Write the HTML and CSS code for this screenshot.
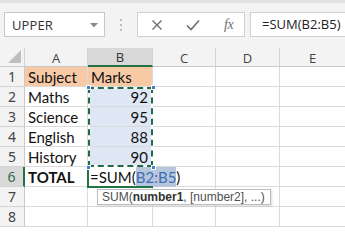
FILE: index.html
```html
<!DOCTYPE html>
<html>
<head>
<meta charset="utf-8">
<link rel="stylesheet" href="styles.css">
</head>
<body>
<div class="app">
  <div class="top">
    <div class="namebox">
      <span class="nb-text">UPPER</span>
      <svg class="nb-caret" width="8" height="5" viewBox="0 0 8 5"><path d="M0 0 H8 L4 4.5 Z" fill="#8a8a8a"/></svg>
    </div>
    <div class="grip"><i></i><i></i><i></i></div>
    <div class="btns">
      <svg class="ic" width="12" height="12" viewBox="0 0 12 12"><path d="M1.5 1.5 L10.5 10.5 M10.5 1.5 L1.5 10.5" stroke="#6e6e6e" stroke-width="1.4" fill="none"/></svg>
      <svg class="ic" width="14" height="12" viewBox="0 0 14 12"><path d="M1 6.5 L5 10.5 L13 1.5" stroke="#6e6e6e" stroke-width="1.6" fill="none"/></svg>
      <span class="fx">fx</span>
    </div>
    <div class="formula">=SUM(B2:B5)</div>
  </div>
  <div class="sheet">
    <div class="grid">
      <div class="hd corner"><span class="tri"></span></div>
      <div class="hd col">A</div>
      <div class="hd col sel">B</div>
      <div class="hd col">C</div>
      <div class="hd col">D</div>
      <div class="hd col last">E</div>

      <div class="hd row">1</div>
      <div class="c orange">Subject</div>
      <div class="c orange">Marks</div>
      <div class="c"></div><div class="c"></div><div class="c last"></div>

      <div class="hd row">2</div>
      <div class="c">Maths</div>
      <div class="c num rng">92</div>
      <div class="c"></div><div class="c"></div><div class="c last"></div>

      <div class="hd row">3</div>
      <div class="c">Science</div>
      <div class="c num rng">95</div>
      <div class="c"></div><div class="c"></div><div class="c last"></div>

      <div class="hd row">4</div>
      <div class="c">English</div>
      <div class="c num rng">88</div>
      <div class="c"></div><div class="c"></div><div class="c last"></div>

      <div class="hd row">5</div>
      <div class="c">History</div>
      <div class="c num rng">90</div>
      <div class="c"></div><div class="c"></div><div class="c last"></div>

      <div class="hd row selrow">6</div>
      <div class="c bold">TOTAL</div>
      <div class="c edit">=SUM(<span class="ref">B2:B5</span><span class="cursor"></span>)</div>
      <div class="c"></div><div class="c"></div><div class="c last"></div>

      <div class="hd row">7</div>
      <div class="c"></div><div class="c"></div><div class="c"></div><div class="c"></div><div class="c last"></div>

      <div class="hd row">8</div>
      <div class="c"></div><div class="c"></div><div class="c"></div><div class="c"></div><div class="c last"></div>
    </div>

    <div class="ants"></div>
    <span class="h h1"></span><span class="h h2"></span><span class="h h3"></span><span class="h h4"></span>
    <div class="active"></div>
    <div class="tip">SUM(<b>number1</b>, [number2], ...)</div>
  </div>
</div>
</body>
</html>
```

FILE: styles.css
```css
* { box-sizing: border-box; }
html, body { margin: 0; padding: 0; }
body {
  width: 345px;
  height: 227px;
  overflow: hidden;
  background: #fff;
  font-family: "Open Sans", "Noto Sans", sans-serif;
}
.app { width: 345px; height: 227px; overflow: hidden; }

.top {
  height: 48px;
  background: #f3f3f3;
  border-top: 3px solid #e2e2e2;
  padding-top: 9px;
  display: flex;
  align-items: flex-start;
}
.namebox {
  margin-left: 4px;
  width: 101px;
  height: 25px;
  background: #fff;
  border: 1px solid #c8c8c8;
  display: flex;
  align-items: center;
  justify-content: space-between;
  padding: 0 6px 0 7px;
}
.nb-text { font-size: 13px; color: #333; letter-spacing: 0.1px; }
.nb-caret { margin-top: 1px; }

.grip {
  width: 32px;
  height: 25px;
  display: flex;
  flex-direction: column;
  align-items: center;
  justify-content: center;
  gap: 3px;
}
.grip i {
  display: block;
  width: 2px;
  height: 2px;
  background: #bdbdbd;
}

.btns {
  width: 108px;
  height: 25px;
  background: #fff;
  border: 1px solid #d0d0d0;
  display: flex;
  align-items: center;
  padding-left: 13px;
}
.btns .ic:nth-child(1) { margin-right: 23px; }
.btns .ic:nth-child(2) { margin-right: 24px; }
.fx {
  font-family: "Liberation Serif", serif;
  font-style: italic;
  font-size: 14px;
  color: #6e6e6e;
  letter-spacing: -0.5px;
}

.formula {
  margin-left: 5px;
  flex: 1;
  height: 25px;
  background: #fff;
  border: 1px solid #d0d0d0;
  border-right: none;
  font-size: 13px;
  color: #222;
  padding-left: 11px;
  line-height: 23px;
  white-space: nowrap;
}

.sheet { position: relative; height: 179px; }
.grid {
  display: grid;
  grid-template-columns: 25px 63px 65px 63px 64px 65px;
  grid-template-rows: 19px repeat(8, 20px);
}
.hd {
  background: #f3f3f3;
  color: #444;
  font-size: 13px;
  display: flex;
  align-items: center;
  justify-content: center;
  border-right: 1px solid #d4d4d4;
  border-bottom: 1px solid #c9c9c9;
}
.hd.col { padding-top: 1px; }
.hd.col.sel {
  background: #d9d9d9;
  border-bottom: 2px solid #217346;
  color: #333;
}
.hd.last { border-right: none; }
.corner { position: relative; }
.tri {
  position: absolute;
  right: 3px;
  bottom: 3px;
  width: 0; height: 0;
  border-left: 13px solid transparent;
  border-bottom: 13px solid #bfbfbf;
}
.hd.row {
  font-size: 14px;
  font-family: "Noto Sans", sans-serif;
  border-bottom: 1px solid #d4d4d4;
  border-right: 1px solid #c9c9c9;
}
.hd.row.selrow {
  background: #d9d9d9;
  border-right: 2px solid #217346;
  color: #2f6a47;
}

.c {
  font-family: "Lato", "Open Sans", sans-serif;
  font-size: 15px;
  color: #111;
  border-right: 1px solid #dadada;
  border-bottom: 1px solid #dadada;
  padding: 0 3px;
  display: flex;
  align-items: center;
  white-space: nowrap;
}
.c.last { border-right: none; }
.c.orange { background: #f8c9a5; }
.c.rng { background: #dfe7f4; }
.c.num { justify-content: flex-end; padding-right: 4px; }
.c.bold { font-weight: bold; }
.c.edit {
  position: relative;
  z-index: 2;
  overflow: visible;
  border-right-color: transparent;
  padding-left: 2px;
}
.ref {
  background: #b7c6dd;
  color: #3f6db3;
  padding: 1px 0;
}
.cursor {
  display: inline-block;
  width: 1px;
  height: 15px;
  background: #000;
  vertical-align: -2px;
}

.ants {
  position: absolute;
  left: 88px;
  top: 39px;
  width: 65px;
  height: 80px;
  border: 2px solid #fff;
  z-index: 3;
}
.ants::before {
  content: "";
  position: absolute;
  inset: -2px;
  border: 2px dashed #1e6b45;
}
.h {
  position: absolute;
  width: 5px;
  height: 5px;
  background: #4a7cc2;
  border: 1px solid #fff;
  z-index: 4;
}
.h1 { left: 86px; top: 37px; }
.h2 { left: 151px; top: 37px; }
.h3 { left: 86px; top: 117px; }
.h4 { left: 151px; top: 117px; }

.active {
  position: absolute;
  left: 87px;
  top: 119px;
  width: 66px;
  height: 21px;
  border-left: 2px solid #217346;
  border-bottom: 2px solid #217346;
  z-index: 3;
}

.tip {
  position: absolute;
  left: 97px;
  top: 141px;
  height: 16px;
  padding: 0 5px 0 4px;
  background: #fff;
  border: 1px solid #bdbdbd;
  box-shadow: 1px 1px 2px rgba(0,0,0,0.15);
  font-family: "Liberation Sans", Arial, sans-serif;
  font-size: 12px;
  line-height: 14px;
  color: #505050;
  white-space: nowrap;
  z-index: 5;
}
.tip b { color: #333; font-weight: bold; }
```
